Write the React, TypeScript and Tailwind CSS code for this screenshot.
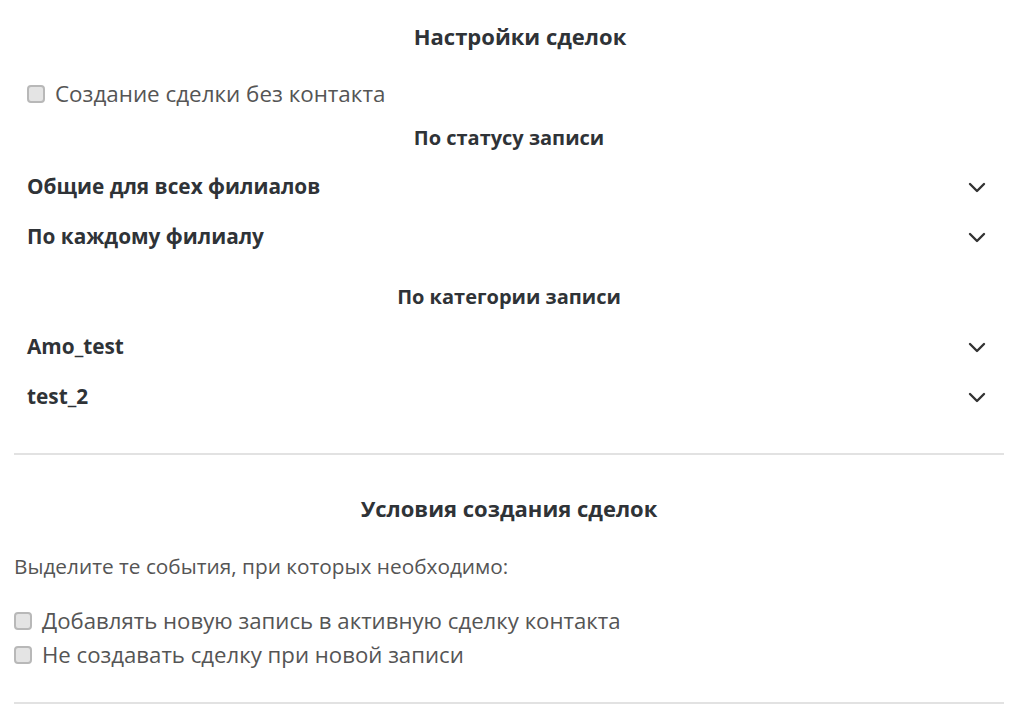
import React from "react";

function Checkbox() {
  return (
    <span className="inline-block w-[18px] h-[18px] shrink-0 rounded-[4px] border-2 border-[#b8b8b8] bg-[#e4e4e4]" />
  );
}

function Chevron() {
  return (
    <svg width="18" height="11" viewBox="0 0 18 11" fill="none">
      <path d="M2 2 L9 9 L16 2" stroke="#333" strokeWidth="2.4" strokeLinecap="round" strokeLinejoin="round" />
    </svg>
  );
}

function AccRow({ label }: { label: string }) {
  return (
    <div className="h-[50px] flex items-center justify-between pr-[5px]">
      <span className="font-bold text-[20.8px] text-[#2f3337]">{label}</span>
      <Chevron />
    </div>
  );
}

function Heading({ children, className = "" }: { children: React.ReactNode; className?: string }) {
  return (
    <div className={"h-[28px] flex items-center justify-center font-bold text-[#2f3337] " + className}>
      {children}
    </div>
  );
}

export default function App() {
  return (
    <div
      className="w-[1024px] h-[722px] bg-white overflow-hidden px-[14px] pt-[22px]"
      style={{ fontFamily: "'Open Sans', sans-serif" }}
    >
      <div className="w-[990px]">
        <div className="px-[13px]">
          <Heading className="pl-[22px] text-[22px]">Настройки сделок</Heading>
          <div className="mt-[30px] h-[28px] flex items-center gap-[10px]">
            <Checkbox />
            <span className="text-[22.4px] text-[#555]">Создание сделки без контакта</span>
          </div>
          <Heading className="mt-[16px] text-[20px]">По статусу записи</Heading>
          <div className="mt-[10px]">
            <AccRow label="Общие для всех филиалов" />
            <AccRow label="По каждому филиалу" />
          </div>
          <Heading className="mt-[21px] text-[20px]">По категории записи</Heading>
          <div className="mt-[11px]">
            <AccRow label="Amo_test" />
            <AccRow label="test_2" />
          </div>
        </div>
        <div className="mt-[31px] h-[2px] bg-[#e2e2e2]" />
        <Heading className="mt-[39px] text-[22px]">Условия создания сделок</Heading>
        <div className="mt-[33px] h-[24px] flex items-center text-[20.8px] text-[#555]">
          Выделите те события, при которых необходимо:
        </div>
        <div className="mt-[25px]">
          <div className="h-[34px] flex items-center gap-[10px]">
            <Checkbox />
            <span className="text-[22.2px] text-[#555]">Добавлять новую запись в активную сделку контакта</span>
          </div>
          <div className="h-[34px] flex items-center gap-[10px]">
            <Checkbox />
            <span className="text-[22.2px] text-[#555]">Не создавать сделку при новой записи</span>
          </div>
        </div>
        <div className="mt-[30px] h-[2px] bg-[#e2e2e2]" />
      </div>
    </div>
  );
}
